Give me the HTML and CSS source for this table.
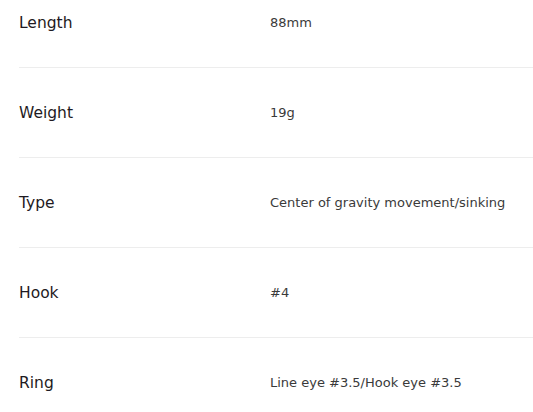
FILE: index.html
```html
<!DOCTYPE html>
<html>
<head>
<meta charset="utf-8">
<link rel="stylesheet" href="styles.css">
</head>
<body>
<dl class="spec">
  <div class="row"><dt class="label">Length</dt><dd class="value">88mm</dd></div>
  <div class="row"><dt class="label">Weight</dt><dd class="value">19g</dd></div>
  <div class="row"><dt class="label">Type</dt><dd class="value">Center of gravity movement/sinking</dd></div>
  <div class="row"><dt class="label">Hook</dt><dd class="value">#4</dd></div>
  <div class="row"><dt class="label">Ring</dt><dd class="value">Line eye #3.5/Hook eye #3.5</dd></div>
</dl>
</body>
</html>
```
FILE: styles.css
```css
html, body {
  margin: 0;
  padding: 0;
  background: #fff;
}
.spec {
  margin: 0 0 0 19px;
  padding: 0;
  font-family: "DejaVu Sans", "Liberation Sans", sans-serif;
}
.row {
  display: grid;
  grid-template-columns: 251px 1fr;
  align-items: center;
  padding: 35px 0 34px;
  border-bottom: 1px solid #ededed;
  height: 20px;
}
.row:first-child {
  padding-top: 13px;
}
.row:last-child {
  border-bottom: none;
}
.label {
  margin: 0;
  font-size: 15.5px;
  line-height: 20px;
  color: #1e1a22;
}
.value {
  margin: 0;
  font-size: 13px;
  line-height: 20px;
  color: #3a3a3a;
}
```
